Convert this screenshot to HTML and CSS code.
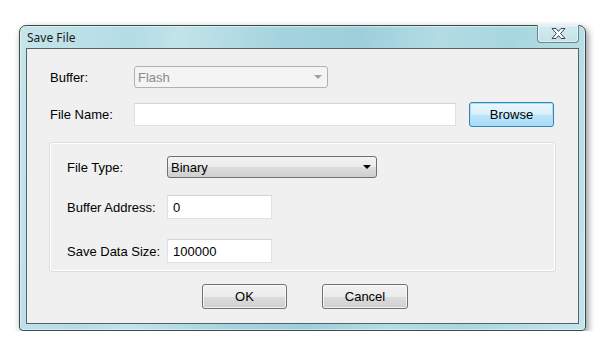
FILE: index.html
```html
<!DOCTYPE html>
<html lang="en">
  <head>
    <meta charset="UTF-8" />
    <title>Save File</title>
    <link rel="stylesheet" href="styles.css">
  </head>
  <body>
    <div class="window">
      <div class="title-bar">
        <span class="title">Save File</span>
        <button class="close-button" aria-label="Close">
          <svg width="15" height="11" viewBox="0 0 15 11">
            <path d="M1 0.5 H5 L7.5 3.4 L10 0.5 H14 L9.6 5.5 L14 10.5 H10 L7.5 7.6 L5 10.5 H1 L5.4 5.5 Z"
                  fill="#fff" stroke="#3a4550" stroke-width="1" stroke-linejoin="round" />
          </svg>
        </button>
      </div>

      <div class="client">
        <div class="row row-buffer">
          <label class="label">Buffer:</label>
          <div class="combo disabled buffer-combo">
            <span class="combo-text">Flash</span>
            <span class="combo-arrow"></span>
          </div>
        </div>

        <div class="row row-file">
          <label class="label">File Name:</label>
          <input class="text-input file-input" type="text" value="" />
          <button class="btn btn-default browse-btn">Browse</button>
        </div>

        <div class="group">
          <div class="row group-row">
            <label class="label label-wide">File Type:</label>
            <div class="combo type-combo">
              <span class="combo-text">Binary</span>
              <span class="combo-arrow"></span>
            </div>
          </div>
          <div class="row group-row address-row">
            <label class="label label-wide">Buffer Address:</label>
            <input class="text-input small-input" type="text" value="0" />
          </div>
          <div class="row group-row size-row">
            <label class="label label-wide">Save Data Size:</label>
            <input class="text-input small-input" type="text" value="100000" />
          </div>
        </div>

        <div class="actions">
          <button class="btn">OK</button>
          <button class="btn">Cancel</button>
        </div>
      </div>
    </div>
  </body>
</html>
```

FILE: styles.css
```css
body {
  margin: 0;
  padding: 25px 0 0 19px;
  background-color: #fff;
  font-family: "Liberation Sans", Arial, sans-serif;
  font-size: 13px;
  color: #000;
}

.window {
  width: 565px;
  height: 304px;
  border: 1px solid #3a4a50;
  border-radius: 7px 7px 4px 4px;
  background: linear-gradient(100deg, #c6e5eb 0%, #b4dce4 18%, #c2e3e9 26%, #a6d4de 42%, #9dcfda 55%, #b3dce4 68%, #a8d6df 80%, #c4e4ea 100%);
  box-shadow: 2px 3px 7px rgba(0, 0, 0, 0.45), inset 0 0 0 1px rgba(255, 255, 255, 0.45);
  display: flex;
  flex-direction: column;
}

.title-bar {
  height: 22px;
  display: flex;
  align-items: flex-start;
  justify-content: space-between;
  padding: 0 6px 0 7px;
}

.title {
  font-family: "Noto Sans", sans-serif;
  font-size: 12px;
  color: #1c1c1c;
  line-height: 22px;
  padding-top: 1px;
}

.close-button {
  width: 42px;
  height: 18px;
  margin-top: -1px;
  padding: 0;
  border: 1px solid #6c8690;
  border-top: none;
  border-radius: 0 0 4px 4px;
  background: linear-gradient(#d6ecf0, #c2e2e8);
  box-shadow: inset 0 0 0 1px rgba(255, 255, 255, 0.5);
  display: flex;
  align-items: center;
  justify-content: center;
}

.client {
  flex: 1;
  margin: 0 6px 6px 6px;
  border: 1px solid #52646a;
  background-color: #f0f0f0;
  padding: 0 22px;
}

.row {
  display: flex;
  align-items: center;
  padding-left: 1px;
}

.label {
  width: 84px;
  flex-shrink: 0;
}

.row-buffer {
  margin-top: 17px;
  height: 22px;
}

.row-file {
  margin-top: 14px;
  height: 25px;
}

.combo {
  box-sizing: border-box;
  height: 22px;
  border: 1px solid #707070;
  border-radius: 3px;
  background: linear-gradient(#f2f2f2 0%, #ebebeb 50%, #dddddd 51%, #cfcfcf 100%);
  display: flex;
  align-items: center;
  justify-content: space-between;
  padding: 0 5px 0 3px;
}

.combo-arrow {
  width: 0;
  height: 0;
  border-left: 4px solid transparent;
  border-right: 4px solid transparent;
  border-top: 4px solid #000;
}

.combo.disabled {
  border-color: #adb2b5;
  background: #f4f4f4;
  color: #8a8a8a;
}

.combo.disabled .combo-arrow {
  border-top-color: #a0a0a0;
}

.buffer-combo {
  width: 194px;
}

.type-combo {
  width: 210px;
}

.text-input {
  box-sizing: border-box;
  height: 23px;
  border: 1px solid #dde2e6;
  border-top-color: #cfd5da;
  background: #fff;
  font-family: "Liberation Sans", Arial, sans-serif;
  font-size: 13px;
  padding: 0 5px;
  margin: 0;
  outline: none;
}

.file-input {
  width: 322px;
}

.small-input {
  width: 105px;
  height: 24px;
}

.btn {
  box-sizing: border-box;
  width: 85px;
  height: 25px;
  border: 1px solid #707070;
  border-radius: 3px;
  background: linear-gradient(#f2f2f2 0%, #ebebeb 50%, #dddddd 51%, #cfcfcf 100%);
  box-shadow: inset 0 0 0 1px rgba(255, 255, 255, 0.7);
  font-family: "Liberation Sans", Arial, sans-serif;
  font-size: 13px;
  color: #000;
  padding: 0;
}

.btn-default {
  border-color: #3c7fb1;
  background: linear-gradient(#eaf6fd 0%, #d9f0fc 50%, #bee6fd 51%, #a7d9f5 100%);
  box-shadow: inset 0 0 0 1px #9fe4fb;
}

.browse-btn {
  margin-left: 13px;
}

.group {
  box-sizing: border-box;
  margin-top: 15px;
  width: 507px;
  height: 130px;
  border: 1px solid #d5dfe5;
  border-radius: 3px;
  box-shadow: inset 0 0 0 1px #fff;
  padding: 13px 0 0 16px;
}

.label-wide {
  width: 100px;
}

.group-row {
  height: 22px;
}

.address-row {
  margin-top: 17px;
  height: 24px;
}

.size-row {
  margin-top: 20px;
  height: 24px;
}

.actions {
  display: flex;
  justify-content: center;
  gap: 35px;
  margin-top: 12px;
  padding-left: 5px;
}

.actions .btn:last-child {
  width: 86px;
}
```
